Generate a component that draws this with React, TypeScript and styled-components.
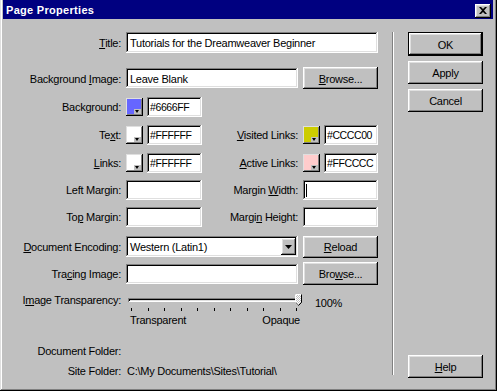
import React from "react";
import styled, { createGlobalStyle } from "styled-components";

const GlobalStyle = createGlobalStyle`
  html, body {
    margin: 0;
    padding: 0;
    background: #c0c0c0;
  }
  body {
    font-family: "Liberation Sans", Arial, sans-serif;
    font-size: 11px;
    letter-spacing: -0.25px;
    color: #000;
  }
  * {
    box-sizing: border-box;
  }
`;

const raised =
  "inset -1px -1px #000, inset 1px 1px #fff, inset -2px -2px #808080, inset 2px 2px #dfdfdf";
const sunken =
  "inset -1px -1px #fff, inset 1px 1px #808080, inset -2px -2px #dfdfdf, inset 2px 2px #000";

function PageProperties() {
  return (
    <Window>
      <TitleBar>
        <span>Page Properties</span>
        <CloseButton aria-label="Close">
          <svg width="8" height="7" viewBox="0 0 8 7">
            <path d="M0 0h2l2 2 2-2h2L5 3.5 8 7H6L4 5 2 7H0l3-3.5z" fill="#000" />
          </svg>
        </CloseButton>
      </TitleBar>

      <Body>
        <Form>
          <Row $top={13} $h={21}>
            <Label>
              <u>T</u>itle:
            </Label>
            <Field $span="2 / 5" $h={21}>
              Tutorials for the Dreamweaver Beginner
            </Field>
          </Row>

          <Row $top={14} $h={22}>
            <Label>
              Background <u>I</u>mage:
            </Label>
            <Field $span="2 / 4">Leave Blank</Field>
            <Button>
              <u>B</u>rowse...
            </Button>
          </Row>

          <Row $top={7} $h={21}>
            <Label>Background:</Label>
            <ColorPick color="#6666FF" value="#6666FF" />
          </Row>

          <Row $top={7} $h={21}>
            <Label>
              Te<u>x</u>t:
            </Label>
            <ColorPick color="#FFFFFF" value="#FFFFFF" />
            <Label>
              <u>V</u>isited Links:
            </Label>
            <ColorPick color="#CCCC00" value="#CCCC00" />
          </Row>

          <Row $top={7} $h={21}>
            <Label>
              <u>L</u>inks:
            </Label>
            <ColorPick color="#FFFFFF" value="#FFFFFF" />
            <Label>
              <u>A</u>ctive Links:
            </Label>
            <ColorPick color="#FFCCCC" value="#FFCCCC" />
          </Row>

          <Row $top={6} $h={21}>
            <Label>Left Margin:</Label>
            <Field />
            <Label>
              Margin <u>W</u>idth:
            </Label>
            <Field>
              <Caret />
            </Field>
          </Row>

          <Row $top={6} $h={21}>
            <Label>
              To<u>p</u> Margin:
            </Label>
            <Field />
            <Label>
              Margi<u>n</u> Height:
            </Label>
            <Field />
          </Row>

          <Row $top={8} $h={23}>
            <Label>
              <u>D</u>ocument Encoding:
            </Label>
            <Field $span="2 / 4" $h={21}>
              <SelectText>Western (Latin1)</SelectText>
              <DropButton>
                <svg width="7" height="4" viewBox="0 0 7 4">
                  <path d="M0 0h7L3.5 4z" fill="#000" />
                </svg>
              </DropButton>
            </Field>
            <Button>
              <u>R</u>eload
            </Button>
          </Row>

          <Row $top={4} $h={23}>
            <Label>
              Tra<u>c</u>ing Image:
            </Label>
            <Field $span="2 / 4" />
            <Button $h={23}>
              Bro<u>w</u>se...
            </Button>
          </Row>

          <Row $top={7} $h={36} $align="start">
            <Label $pad={2}>
              I<u>m</u>age Transparency:
            </Label>
            <SliderBox>
              <TrackArea>
                <Groove />
                <Thumb width="7" height="12" viewBox="0 0 7 12">
                  <defs>
                    <pattern id="dither" width="2" height="2" patternUnits="userSpaceOnUse">
                      <rect width="2" height="2" fill="#c0c0c0" />
                      <rect width="1" height="1" fill="#fff" />
                      <rect x="1" y="1" width="1" height="1" fill="#fff" />
                    </pattern>
                  </defs>
                  <path d="M0.5 0.5H6.5V8.5L3.5 11.5L0.5 8.5Z" fill="url(#dither)" stroke="#808080" />
                  <path d="M0.5 8.5V0.5H6.5" fill="none" stroke="#fff" />
                  <path d="M6.5 0.5V8.5L3.5 11.5" fill="none" stroke="#000" />
                </Thumb>
              </TrackArea>
              <Ticks>
                {Array.from({ length: 11 }).map((_, i) => (
                  <Tick key={i} />
                ))}
              </Ticks>
              <Scale>
                <span>Transparent</span>
                <span>Opaque</span>
              </Scale>
            </SliderBox>
            <Percent>100%</Percent>
          </Row>

          <Row $top={15} $h={14}>
            <Label>Document Folder:</Label>
          </Row>

          <Row $top={6} $h={14}>
            <Label>Site Folder:</Label>
            <Info>{"C:\\My Documents\\Sites\\Tutorial\\"}</Info>
          </Row>
        </Form>

        <Separator />

        <Side>
          <Button $default>OK</Button>
          <Button $h={23}>Apply</Button>
          <Button $h={23}>Cancel</Button>
          <Button $h={23} $push>
            <u>H</u>elp
          </Button>
        </Side>
      </Body>
    </Window>
  );
}

function ColorPick({ color, value }: { color: string; value: string }) {
  return (
    <Pick>
      <Swatch $color={color}>
        <SwatchArrow />
      </Swatch>
      <HexField>{value}</HexField>
    </Pick>
  );
}

const Window = styled.div`
  width: 497px;
  height: 391px;
  background: #c0c0c0;
  padding: 0 4px 3px 3px;
  box-shadow: inset -1px -1px #000, inset 1px 0 #dfdfdf, inset -2px -2px #808080,
    inset 2px 0 #fff;
  display: flex;
  flex-direction: column;
  overflow: hidden;
`;

const TitleBar = styled.div`
  height: 19px;
  flex: none;
  background: #000080;
  color: #fff;
  font-weight: bold;
  font-size: 11px;
  letter-spacing: 0.3px;
  display: flex;
  align-items: center;
  justify-content: space-between;
  padding: 0 2px 0 3px;
`;

const CloseButton = styled.div`
  width: 16px;
  height: 14px;
  margin-top: 3px;
  background: #c0c0c0;
  box-shadow: ${raised};
  display: flex;
  align-items: center;
  justify-content: center;
  padding: 0 1px 1px 0;
`;

const Body = styled.div`
  flex: 1;
  display: flex;
  padding-bottom: 10px;
`;

const Form = styled.div`
  width: 375px;
  display: flex;
  flex-direction: column;
`;

const Row = styled.div<{ $top: number; $h: number; $align?: string }>`
  display: grid;
  grid-template-columns: 118px 76px 91px 75px;
  column-gap: 5px;
  align-items: ${(p) => p.$align ?? "center"};
  height: ${(p) => p.$h}px;
  margin-top: ${(p) => p.$top}px;
`;

const Label = styled.span<{ $pad?: number }>`
  text-align: right;
  white-space: nowrap;
  padding-top: ${(p) => p.$pad ?? 1}px;
`;

const Field = styled.div<{ $span?: string; $h?: number }>`
  grid-column: ${(p) => p.$span ?? "auto"};
  height: ${(p) => p.$h ?? 20}px;
  background: #fff;
  box-shadow: ${sunken};
  padding: 1px 4px 0;
  display: flex;
  align-items: center;
  white-space: nowrap;
  overflow: hidden;
`;

const HexField = styled(Field)`
  flex: 1;
  min-width: 0;
  padding: 1px 2px 0 3px;
  font-size: 10.5px;
  letter-spacing: -0.4px;
`;

const Caret = styled.span`
  width: 1px;
  height: 13px;
  margin-left: -1px;
  background: #000;
`;

const SelectText = styled.span`
  flex: 1;
`;

const DropButton = styled.span`
  width: 15px;
  height: 17px;
  margin: -1px -2px 0 0;
  background: #c0c0c0;
  box-shadow: ${raised};
  display: flex;
  align-items: center;
  justify-content: center;
`;

const Button = styled.div<{ $default?: boolean; $h?: number; $push?: boolean }>`
  width: 75px;
  background: #c0c0c0;
  box-shadow: ${raised};
  border: ${(p) => (p.$default ? "1px solid #000" : "none")};
  height: ${(p) => (p.$default ? 24 : p.$h ?? 22)}px;
  margin-top: ${(p) => (p.$push ? "auto" : "0")};
  display: flex;
  align-items: center;
  justify-content: center;
  padding-top: 1px;
  white-space: nowrap;
`;

const Pick = styled.div`
  display: flex;
  align-items: center;
  gap: 4px;
  min-width: 0;
`;

const Swatch = styled.div<{ $color: string }>`
  position: relative;
  width: 17px;
  height: 18px;
  flex: none;
  background: ${(p) => p.$color};
  box-shadow: inset -1px -1px #000, inset 1px 1px #dfdfdf, inset -2px -2px #808080;
`;

const SwatchArrow = styled.span`
  position: absolute;
  right: 2px;
  bottom: 2px;
  width: 7px;
  height: 5px;
  background: #c0c0c0;
  &::after {
    content: "";
    position: absolute;
    left: 1px;
    top: 1px;
    border-left: 2.5px solid transparent;
    border-right: 2.5px solid transparent;
    border-top: 3px solid #000;
  }
`;

const SliderBox = styled.div`
  grid-column: 2 / 4;
  width: 175px;
  display: flex;
  flex-direction: column;
`;

const TrackArea = styled.div`
  position: relative;
  height: 14px;
`;

const Groove = styled.div`
  margin: 6px 0 0 2px;
  width: 172px;
  height: 4px;
  box-shadow: inset 1px 1px #808080, inset -1px -1px #fff, inset 2px 2px #000,
    inset -2px -2px #dfdfdf;
`;

const Thumb = styled.svg`
  position: absolute;
  left: 169px;
  top: 2px;
`;

const Ticks = styled.div`
  display: flex;
  justify-content: space-between;
  margin: 2px 4px 0 5px;
  height: 3px;
`;

const Tick = styled.span`
  width: 1px;
  height: 3px;
  background: #000;
`;

const Scale = styled.div`
  display: flex;
  justify-content: space-between;
  margin-top: 3px;
  padding: 0 1px 0 4px;
  line-height: 13px;
`;

const Percent = styled.span`
  padding: 5px 0 0 12px;
`;

const Info = styled.span`
  grid-column: 2 / 5;
  white-space: nowrap;
  padding: 1px 0 0 1px;
`;

const Separator = styled.div`
  width: 2px;
  margin: 13px 0 3px 14px;
  box-shadow: inset 1px 0 #808080, inset -1px 0 #fff;
`;

const Side = styled.div`
  width: 75px;
  margin-left: 14px;
  padding-top: 13px;
  display: flex;
  flex-direction: column;
  gap: 5px;
`;

export default function App() {
  return (
    <>
      <GlobalStyle />
      <PageProperties />
    </>
  );
}
